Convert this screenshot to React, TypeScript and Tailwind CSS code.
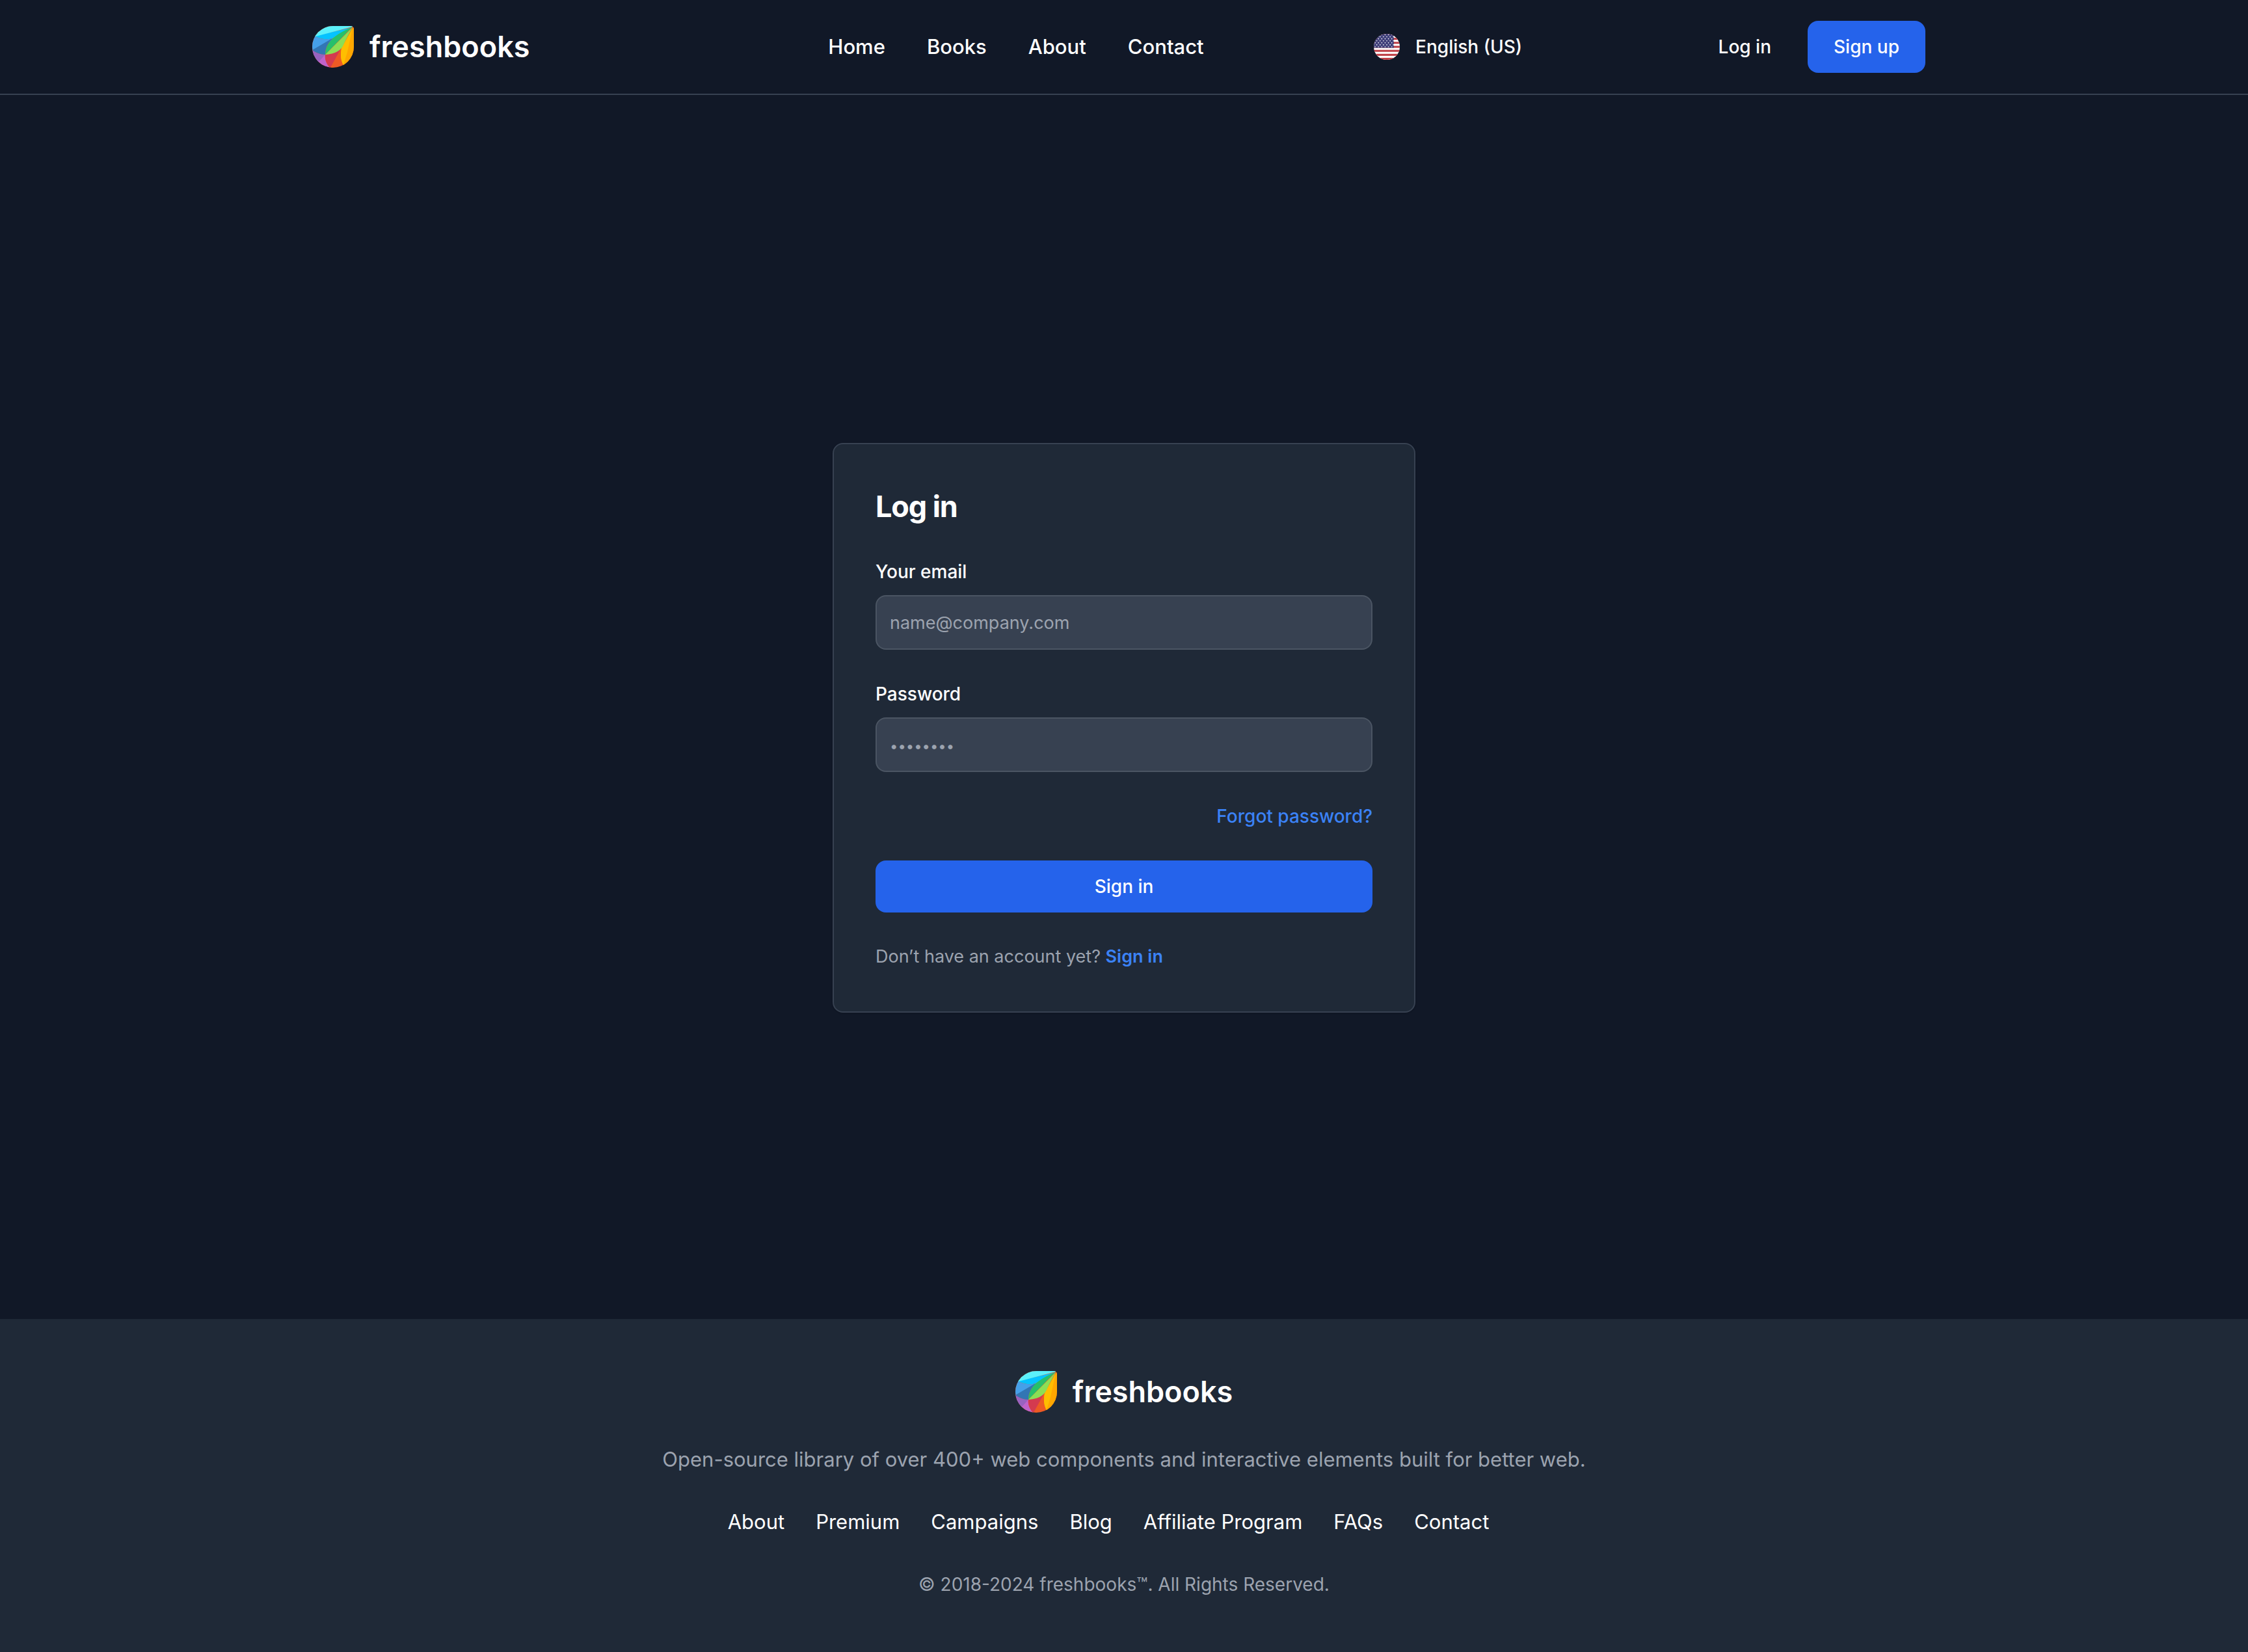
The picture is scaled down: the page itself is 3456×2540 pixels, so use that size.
import React from "react";

function Logo() {
  return (
    <svg className="size-16" viewBox="0 0 64 64" aria-hidden="true">
      <defs>
        <clipPath id="drop">
          <path d="M32 0H59C62 0 64 2 64 5V32A32 32 0 1 1 32 0Z" />
        </clipPath>
      </defs>
      <g clipPath="url(#drop)">
        <rect width="64" height="64" fill="#ed5a24" />
        <path d="M0 38C6 42 13 44 20 44C19 52 22 58 27 64H0Z" fill="#c063cb" />
        <path d="M0 36C6 42 13 44 20 44L10 55L0 55Z" fill="#9863c0" />
        <path d="M20 44C19 51 22 58 27 64L29 62L44 35Z" fill="#d43a4f" />
        <path d="M64 1V64H50C44 55 42 44 46 32Z" fill="#ffa700" />
        <path d="M62 3L54 40L48 60C44 54 43 44 45 34Z" fill="#ffbe00" />
        <path d="M0 37V12L5 16C14 21 24 21 32 19L28 24Z" fill="#45a0e9" />
        <path d="M0 37L29 20L32 19C24 26 20 34 20 44C12 44 6 41 0 37Z" fill="#3276b4" />
        <path d="M0 16H5C15 21 24 21 31 19L62 2Z" fill="#06c3ff" />
        <path d="M0 0H64L62 1L5 16H0Z" fill="#5cf1fb" />
        <path d="M62 1C44 10 21 19 20 44Z" fill="#27c06b" />
        <path d="M62 2L20 44C32 43 43 40 48 29C52 20 57 11 62 2Z" fill="#8cdf55" />
      </g>
    </svg>
  );
}

function Brand() {
  return (
    <a href="#" className="flex items-center gap-6">
      <Logo />
      <span className="text-[45px] leading-[64px] font-semibold text-white">freshbooks</span>
    </a>
  );
}

const stripes = [0, 2, 4, 6, 8, 10, 12];
const starRows = [0, 1, 2, 3, 4, 5, 6];
const starCols = [0, 1, 2, 3, 4, 5];

function Flag() {
  return (
    <svg className="size-10 rounded-full" viewBox="0 0 39 39" aria-hidden="true">
      <rect width="39" height="39" fill="#fff" />
      {stripes.map((n) => (
        <rect key={n} y={n * 3} width="39" height="3" fill="#bd3d44" />
      ))}
      <rect width="30" height="21" fill="#40407a" />
      {starRows.map((r) =>
        starCols.map((c) => (
          <circle key={`${r}-${c}`} cx={2 + c * 5 + (r % 2) * 2.5} cy={1.5 + r * 3} r="0.8" fill="#fff" />
        )),
      )}
    </svg>
  );
}

const navLinks = ["Home", "Books", "About", "Contact"];
const footerLinks = ["About", "Premium", "Campaigns", "Blog", "Affiliate Program", "FAQs", "Contact"];

function Header() {
  return (
    <header className="border-b-2 border-[#374151]">
      <div className="mx-auto flex max-w-[2560px] items-center justify-between p-8">
        <Brand />
        {/* empty slot that shares the free space between brand and menu */}
        <div />
        <nav>
          <ul className="flex gap-16 text-[31px] leading-[48px] font-medium">
            {navLinks.map((t) => (
              <li key={t}>
                <a href="#">{t}</a>
              </li>
            ))}
          </ul>
        </nav>
        <button type="button" className="flex items-center gap-6 px-8 text-[28px] leading-[40px] font-medium">
          <Flag />
          English (US)
        </button>
        <div className="mr-4 flex items-center gap-4 text-[28px] leading-[40px] font-medium">
          <button type="button" className="rounded-2xl px-10 py-5">Log in</button>
          <button type="button" className="rounded-2xl bg-[#2563eb] px-10 py-5">Sign up</button>
        </div>
      </div>
    </header>
  );
}

const inputClass =
  "block h-[84px] w-full rounded-2xl border-2 border-[#4b5563] bg-[#374151] px-5 text-[27px] text-white placeholder:text-[#9ca3af]";

function LoginCard() {
  return (
    <form
      onSubmit={(e) => e.preventDefault()}
      className="flex w-full max-w-[896px] flex-col gap-12 rounded-2xl border-2 border-[#374151] bg-[#1f2937] p-16 text-[27px] leading-[40px] shadow-sm"
    >
      <h1 className="text-[45px] leading-[64px] font-bold tracking-tight">Log in</h1>
      <div>
        <label htmlFor="email" className="mb-4 block text-[28px] font-medium">Your email</label>
        <input id="email" type="email" placeholder="name@company.com" className={inputClass} />
      </div>
      <div>
        <label htmlFor="password" className="mb-4 block text-[28px] font-medium">Password</label>
        <input
          id="password"
          type="password"
          placeholder="••••••••"
          className={`${inputClass} placeholder:text-[22px]`}
        />
      </div>
      <a href="#" className="self-end text-[28px] font-medium text-[#3b82f6]">Forgot password?</a>
      <button type="submit" className="rounded-2xl bg-[#2563eb] py-5 text-[28px] font-medium">Sign in</button>
      <p className="text-[#9ca3af]">
        Don’t have an account yet?{" "}
        <a href="#" className="font-semibold text-[#3b82f6]">Sign in</a>
      </p>
    </form>
  );
}

function Footer() {
  return (
    <footer className="flex flex-col items-center bg-[#1f2937] p-20 text-[#9ca3af]">
      <Brand />
      <p className="my-12 text-[31px] leading-[48px]">
        Open-source library of over 400+ web components and interactive elements built for better web.
      </p>
      <ul className="mb-12 flex text-[31px] leading-[48px] text-white">
        {footerLinks.map((t) => (
          <li key={t} className="mr-12">
            <a href="#">{t}</a>
          </li>
        ))}
      </ul>
      <p className="text-[28px] leading-[48px]">© 2018-2024 freshbooks™. All Rights Reserved.</p>
    </footer>
  );
}

export default function App() {
  return (
    <div className="flex min-h-screen flex-col bg-[#111827] font-['Inter',sans-serif] text-white">
      <Header />
      <main className="flex grow items-center justify-center pt-16">
        <LoginCard />
      </main>
      <Footer />
    </div>
  );
}
